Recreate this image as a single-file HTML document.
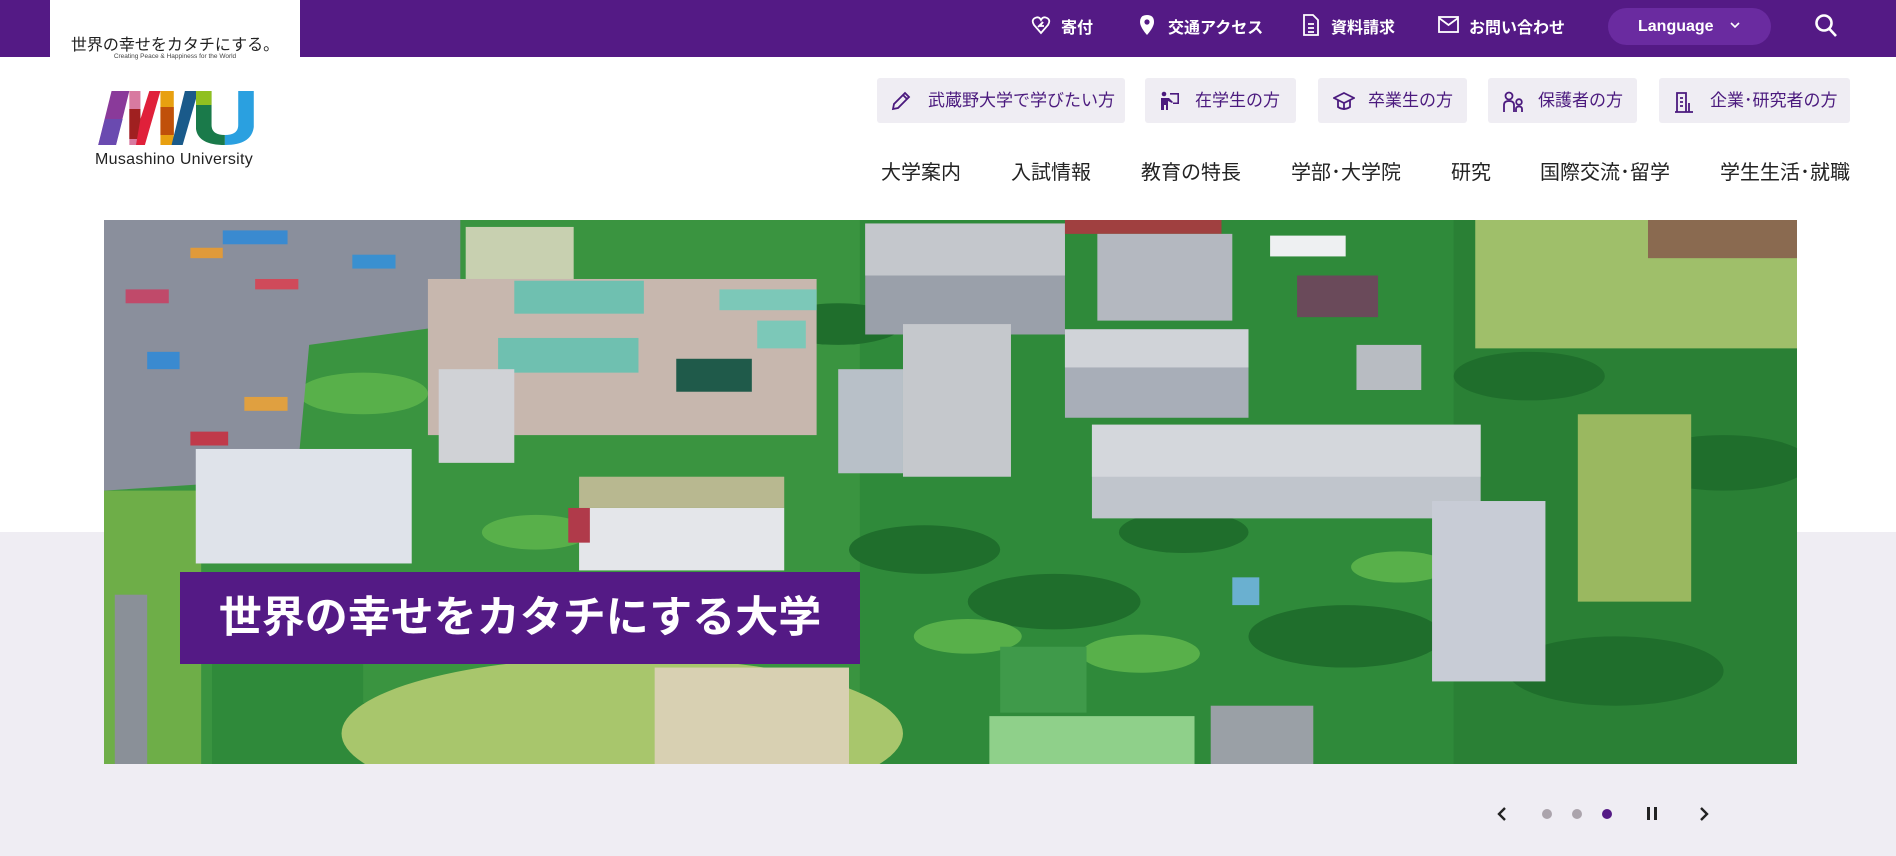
<!DOCTYPE html>
<html><head><meta charset="utf-8"><style>
*{margin:0;padding:0;box-sizing:border-box}
body{width:1896px;height:856px;overflow:hidden;background:#fff;font-family:"Liberation Sans","Noto Sans CJK JP",sans-serif;position:relative}
.abs{position:absolute}
#top{left:0;top:0;width:1896px;height:57px;background:#541a85}
#grey{left:0;top:532px;width:1896px;height:324px;background:#efedf3}
.tl{color:#fff;font-size:16px;font-weight:bold;top:14px;white-space:nowrap}
.btn{top:78px;height:45px;background:#efedf3;border-radius:3px;color:#4b1a7e;font-size:17px;line-height:45px;white-space:nowrap}
.btn svg{position:absolute;top:13px}
.nav{top:158px;font-size:20px;color:#222;white-space:nowrap;line-height:30px}
.dot{width:10px;height:10px;border-radius:50%;top:809px;background:#aba4ac}
</style></head><body>
<div class="abs" id="top"></div>
<div class="abs" id="grey"></div>
<div class="abs" style="left:50px;top:0;width:250px;height:57px;background:#fff"></div>
<div class="abs" style="left:50px;top:31px;width:250px;text-align:center;font-size:16px;color:#222;white-space:nowrap">世界の幸せをカタチにする。</div>
<div class="abs" style="left:50px;top:53px;width:250px;text-align:center;font-size:6.5px;color:#444;white-space:nowrap">Creating Peace &amp; Happiness for the World</div>

<svg class="abs" style="left:96px;top:89px" width="160" height="58" viewBox="0 0 144 58" preserveAspectRatio="none">
<polygon points="14,2 30,2 18,56 2,56" fill="#8a3a9a"/>
<polygon points="8,30 24,30 18,56 2,56" fill="#6a4ab0"/>
<polygon points="30,2 40,2 40,56 30,56" fill="#d87aa0"/>
<polygon points="30,20 40,20 40,50 30,50" fill="#a02020"/>
<polygon points="48,2 58,2 44,56 36,56 40,30" fill="#e0203a"/>
<polygon points="58,2 70,2 70,56 58,56" fill="#e8a010"/>
<polygon points="58,18 70,18 70,46 58,46" fill="#c0500a"/>
<polygon points="80,2 92,2 78,56 68,56" fill="#1a5a8a"/>
<path d="M90,2 L104,2 L104,36 Q104,46 116,46 L116,56 Q92,56 90,40 Z" fill="#1a7a4a"/>
<rect x="90" y="2" width="14" height="14" fill="#90c020"/>
<path d="M116,46 Q128,46 128,36 L128,2 L142,2 L142,38 Q140,56 116,56 Z" fill="#2aa0e0"/>
</svg>
<div class="abs" style="left:95px;top:151px;font-size:16px;color:#222;letter-spacing:0.3px">Musashino University</div>

<!-- top links -->
<svg class="abs" style="left:1031px;top:15px" width="20" height="20" viewBox="0 0 20 20" fill="none" stroke="#fff" stroke-width="1.8"><path d="M10 18 L3 10 Q0 5 4 3 Q8 1 10 5 Q12 1 16 3 Q20 5 17 10 Z M7 12 L12 7 L9 11 L13 11"/></svg>
<div class="abs tl" style="left:1061px">寄付</div>
<svg class="abs" style="left:1139px;top:14px" width="16" height="22" viewBox="0 0 16 22"><path d="M8 1 Q1 1 1 8 Q1 13 8 21 Q15 13 15 8 Q15 1 8 1Z" fill="#fff"/><circle cx="8" cy="8" r="2.6" fill="#541a85"/></svg>
<div class="abs tl" style="left:1168px">交通アクセス</div>
<svg class="abs" style="left:1302px;top:14px" width="18" height="22" viewBox="0 0 18 22" fill="none" stroke="#fff" stroke-width="1.8"><path d="M2 1 H11 L16 6 V21 H2 Z M6 10 H12 M6 14 H12 M6 18 H12"/></svg>
<div class="abs tl" style="left:1331px">資料請求</div>
<svg class="abs" style="left:1438px;top:16px" width="21" height="17" viewBox="0 0 21 17" fill="none" stroke="#fff" stroke-width="1.8"><rect x="1" y="1" width="19" height="15"/><path d="M1 2 L10.5 9 L20 2"/></svg>
<div class="abs tl" style="left:1469px">お問い合わせ</div>
<div class="abs" style="left:1608px;top:8px;width:163px;height:37px;border-radius:19px;background:#6a2ba0"></div>
<div class="abs" style="left:1638px;top:8px;height:37px;line-height:37px;color:#fff;font-size:16px;font-weight:bold">Language</div>
<svg class="abs" style="left:1730px;top:21px" width="10" height="8" viewBox="0 0 10 8" fill="none" stroke="#fff" stroke-width="1.6"><path d="M1 2 L5 6 L9 2"/></svg>
<svg class="abs" style="left:1814px;top:13px" width="24" height="26" viewBox="0 0 24 26" fill="none" stroke="#fff" stroke-width="2.6"><circle cx="10" cy="10" r="7.5"/><path d="M15.5 16 L22 23"/></svg>

<!-- audience buttons -->
<div class="abs btn" style="left:877px;width:248px"><svg style="left:14px" width="20" height="20" viewBox="0 0 20 20" fill="none" stroke="#4b1a7e" stroke-width="1.8"><path d="M2 18 L3 13 L14 2 L18 6 L7 17 Z M12 4 L16 8"/></svg><span style="position:absolute;left:51px">武蔵野大学で学びたい方</span></div>
<div class="abs btn" style="left:1145px;width:151px"><svg style="left:15px" width="20" height="20" viewBox="0 0 20 20" fill="#4b1a7e"><circle cx="4" cy="3" r="2.3"/><path d="M1 7 H9 L13 11 L12 12 L8 10 V19 H6 V14 H4 V19 H1 Z"/><path d="M10 2 H19 V13 H13 V11.5 H17.4 V3.6 H10 Z"/></svg><span style="position:absolute;left:50px">在学生の方</span></div>
<div class="abs btn" style="left:1318px;width:149px"><svg style="left:15px" width="22" height="20" viewBox="0 0 22 20" fill="none" stroke="#4b1a7e" stroke-width="1.8"><path d="M11 2 L21 7 L11 12 L1 7 Z M5 9 V16 Q11 20 17 16 V9 M11 12 V19"/></svg><span style="position:absolute;left:50px">卒業生の方</span></div>
<div class="abs btn" style="left:1488px;width:149px"><svg style="left:15px" width="22" height="22" viewBox="0 0 22 22" fill="none" stroke="#4b1a7e" stroke-width="1.8"><circle cx="6" cy="5" r="3.5"/><path d="M1 21 V14 Q1 10 6 10 Q11 10 11 14 V21"/><circle cx="16" cy="11" r="2.8"/><path d="M13 21 V18 Q13 15.5 16 15.5 Q19 15.5 19 18 V21"/></svg><span style="position:absolute;left:50px">保護者の方</span></div>
<div class="abs btn" style="left:1659px;width:191px"><svg style="left:14px" width="22" height="22" viewBox="0 0 22 22" fill="none" stroke="#4b1a7e" stroke-width="1.8"><path d="M2 21 H20 M4 21 V2 H13 V21 M7 7 H10 M7 11 H10 M7 15 H10 M16 12 V21"/></svg><span style="position:absolute;left:51px">企業･研究者の方</span></div>

<!-- main nav -->
<div class="abs nav" style="left:881px">大学案内</div>
<div class="abs nav" style="left:1011px">入試情報</div>
<div class="abs nav" style="left:1141px">教育の特長</div>
<div class="abs nav" style="left:1291px">学部･大学院</div>
<div class="abs nav" style="left:1451px">研究</div>
<div class="abs nav" style="left:1540px">国際交流･留学</div>
<div class="abs nav" style="left:1720px">学生生活･就職</div>

<!-- hero -->
<svg class="abs" style="left:104px;top:220px" width="1693" height="544" viewBox="0 0 1568 1568" preserveAspectRatio="none">
<rect width="1568" height="1568" fill="#2f8a3a"/>
<rect x="0" y="0" width="700" height="1568" fill="#3a9440"/>
<rect x="1250" y="0" width="318" height="1568" fill="#2a8035"/>
<g fill="#1f6e2c"><circle cx="760" cy="950" r="70"/><circle cx="880" cy="1100" r="80"/><circle cx="1000" cy="900" r="60"/><circle cx="1150" cy="1200" r="90"/><circle cx="1400" cy="1300" r="100"/><circle cx="1500" cy="700" r="80"/><circle cx="1320" cy="450" r="70"/><circle cx="260" cy="1450" r="60"/><circle cx="680" cy="300" r="60"/></g>
<g fill="#58b04a"><circle cx="240" cy="500" r="60"/><circle cx="400" cy="900" r="50"/><circle cx="960" cy="1250" r="55"/><circle cx="1200" cy="1000" r="45"/><circle cx="800" cy="1200" r="50"/></g>
<polygon points="0,0 330,0 330,300 190,360 180,700 100,760 0,780" fill="#8a8f9c"/>
<rect x="20" y="200" width="40" height="40" fill="#c04a6a"/><rect x="110" y="30" width="60" height="40" fill="#3a8ad0"/><rect x="80" y="80" width="30" height="30" fill="#e09a3a"/><rect x="40" y="380" width="30" height="50" fill="#3a8ad0"/><rect x="130" y="510" width="40" height="40" fill="#e0a040"/><rect x="80" y="610" width="35" height="40" fill="#c03a4a"/><rect x="230" y="100" width="40" height="40" fill="#3a90d0"/><rect x="140" y="170" width="40" height="30" fill="#d04a5a"/>
<rect x="0" y="780" width="90" height="788" fill="#6eae48"/>
<rect x="100" y="1280" width="140" height="288" fill="#2f8a3a"/>
<ellipse cx="480" cy="1480" rx="260" ry="220" fill="#a8c66c"/>
<rect x="510" y="1290" width="180" height="278" fill="#d8d0b2"/>
<rect x="335" y="20" width="100" height="160" fill="#c8d0b0"/>
<rect x="300" y="170" width="360" height="450" fill="#c7b7ae"/>
<rect x="380" y="175" width="120" height="95" fill="#6fc0b0"/>
<rect x="365" y="340" width="130" height="100" fill="#6fc0b0"/>
<rect x="570" y="200" width="90" height="60" fill="#7cc8b8"/>
<rect x="605" y="290" width="45" height="80" fill="#7cc8b8"/>
<rect x="530" y="400" width="70" height="95" fill="#1f5a4a"/>
<rect x="310" y="430" width="70" height="270" fill="#d0d2d6"/>
<rect x="85" y="660" width="200" height="330" fill="#dfe3ea"/>
<rect x="440" y="830" width="190" height="180" fill="#e4e6ea"/>
<rect x="430" y="830" width="20" height="100" fill="#b03a4a"/>
<rect x="440" y="740" width="190" height="90" fill="#b8b890"/>
<rect x="705" y="10" width="185" height="320" fill="#9aa0aa"/>
<rect x="705" y="10" width="185" height="150" fill="#c4c7cc"/>
<rect x="890" y="0" width="145" height="40" fill="#a04040"/>
<rect x="920" y="40" width="125" height="250" fill="#b4b8c0"/>
<rect x="740" y="300" width="100" height="440" fill="#c5c8cc"/>
<rect x="680" y="430" width="60" height="300" fill="#b8c0c8"/>
<rect x="890" y="315" width="170" height="255" fill="#a8aeb8"/>
<rect x="890" y="315" width="170" height="110" fill="#d0d3d8"/>
<rect x="915" y="590" width="360" height="270" fill="#c0c5cc"/>
<rect x="915" y="590" width="360" height="150" fill="#d4d7dc"/>
<rect x="1230" y="810" width="105" height="520" fill="#c8ccd6"/>
<rect x="1080" y="45" width="70" height="60" fill="#eef0f2"/>
<rect x="1105" y="160" width="75" height="120" fill="#6a4a5a"/>
<rect x="1160" y="360" width="60" height="130" fill="#b8bcc2"/>
<rect x="1270" y="0" width="298" height="370" fill="#9fbf6a"/>
<rect x="1430" y="0" width="138" height="110" fill="#8a6a50"/>
<rect x="1365" y="560" width="105" height="540" fill="#9ab860"/>
<rect x="830" y="1230" width="80" height="190" fill="#3f9a4a"/>
<rect x="820" y="1430" width="190" height="138" fill="#8fd08a"/>
<rect x="1025" y="1400" width="95" height="168" fill="#9aa0a6"/>
<rect x="1045" y="1030" width="25" height="80" fill="#6ab0d0"/>
<rect x="10" y="1080" width="30" height="488" fill="#8a9098"/>
</svg>
<div class="abs" style="left:180px;top:572px;width:680px;height:92px;background:#541a85"></div>
<div class="abs" style="left:180px;top:572px;width:680px;height:92px;line-height:92px;text-align:center;color:#fff;font-size:43px;font-weight:bold;white-space:nowrap">世界の幸せをカタチにする大学</div>

<!-- controls -->
<svg class="abs" style="left:1496px;top:806px" width="12" height="16" viewBox="0 0 12 16" fill="none" stroke="#222" stroke-width="2.4"><path d="M9 2 L3 8 L9 14"/></svg>
<div class="abs dot" style="left:1542px"></div>
<div class="abs dot" style="left:1572px"></div>
<div class="abs dot" style="left:1602px;background:#541a85"></div>
<div class="abs" style="left:1647px;top:807px;width:3px;height:13px;background:#222"></div>
<div class="abs" style="left:1654px;top:807px;width:3px;height:13px;background:#222"></div>
<svg class="abs" style="left:1698px;top:806px" width="12" height="16" viewBox="0 0 12 16" fill="none" stroke="#222" stroke-width="2.4"><path d="M3 2 L9 8 L3 14"/></svg>
</body></html>
